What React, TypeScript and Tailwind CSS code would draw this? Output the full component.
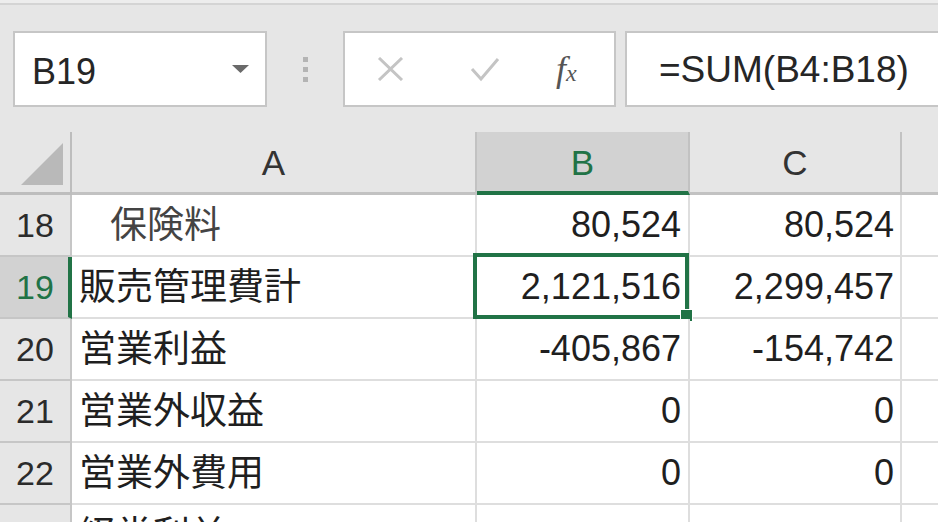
import React from "react";

const font = "font-['Liberation_Sans','Noto_Sans_CJK_JP',sans-serif]";

type Row = {
  num?: number;
  label: string;
  indent?: boolean;
  b: string;
  c: string;
};

// last row is only partly in view, its numbers sit below the edge
const rows: Row[] = [
  { num: 18, label: "保険料", indent: true, b: "80,524", c: "80,524" },
  { num: 19, label: "販売管理費計", b: "2,121,516", c: "2,299,457" },
  { num: 20, label: "営業利益", b: "-405,867", c: "-154,742" },
  { num: 21, label: "営業外収益", b: "0", c: "0" },
  { num: 22, label: "営業外費用", b: "0", c: "0" },
  { label: "経常利益", b: "", c: "" },
];

function FormulaBar() {
  return (
    <div className="bg-[#e6e6e6]">
      <div className="h-[3px] bg-[#ededed]" />
      <div className="h-[2px] bg-[#d4d4d4]" />
      <div className="flex items-center pl-[13px] pt-[26px] pb-[25px]">
        <div className="flex h-[76px] w-[254px] items-center justify-between border-2 border-[#c6c6c6] bg-white pl-[17px] pr-[16px]">
          <span className="pt-[6px] text-[36px] leading-none text-[#262626]">B19</span>
          <svg width="17" height="8" viewBox="0 0 17 8">
            <path d="M0 0 H17 L8.5 8 Z" fill="#6a6a6a" />
          </svg>
        </div>
        <div className="flex w-[76px] flex-col items-center gap-[5px]">
          <span className="h-[5px] w-[5px] bg-[#b4b4b4]" />
          <span className="h-[5px] w-[5px] bg-[#b4b4b4]" />
          <span className="h-[5px] w-[5px] bg-[#b4b4b4]" />
        </div>
        <div className="flex h-[76px] w-[273px] items-center border-2 border-[#c6c6c6] bg-white">
          <svg className="ml-[32px]" width="27" height="24" viewBox="0 0 27 24">
            <path d="M2 1 L25 23 M25 1 L2 23" stroke="#c4c4c4" strokeWidth="3" />
          </svg>
          <svg className="ml-[66px]" width="30" height="26" viewBox="0 0 30 26">
            <path d="M2 13 L11 23 L28 3" stroke="#c4c4c4" strokeWidth="3" fill="none" />
          </svg>
          <span className="ml-[56px] flex items-baseline font-['Liberation_Serif',serif] italic text-[#555]">
            <span className="text-[36px] leading-none">f</span>
            <span className="text-[24px] leading-none">x</span>
          </span>
        </div>
        <div className="ml-[9px] flex h-[76px] flex-1 items-center border-y-2 border-l-2 border-[#c6c6c6] bg-white pl-[32px]">
          <span className="text-[37px] leading-none text-[#262626]">=SUM(B4:B18)</span>
        </div>
      </div>
    </div>
  );
}

function ColumnHeaders() {
  return (
    <div className="grid h-[63px] grid-cols-[72px_405px_213px_212px_1fr] bg-[#e6e6e6] text-[35px] leading-none text-[#333]">
      <div className="flex items-start justify-start border-r-2 border-b-[3px] border-[#bdbdbd] pl-[21px] pt-[11px]">
        <svg width="42" height="42" viewBox="0 0 42 42">
          <path d="M42 0 V42 H0 Z" fill="#b9b9b9" />
        </svg>
      </div>
      <div className="flex items-center justify-center border-r-2 border-b-[3px] border-[#c2c2c2]">A</div>
      <div className="flex items-center justify-center border-r-2 border-r-[#c2c2c2] border-b-4 border-b-[#217346] bg-[#d2d2d2] pt-[1px] text-[#217346]">
        B
      </div>
      <div className="flex items-center justify-center border-r-2 border-b-[3px] border-[#c2c2c2]">C</div>
      <div className="border-b-[3px] border-[#c2c2c2]" />
    </div>
  );
}

function SheetRow({ row }: { row: Row }) {
  const active = row.num === 19;
  return (
    <div className="grid h-[62px] grid-cols-[72px_405px_213px_212px_1fr] leading-none text-[#1f1f1f]">
      <div
        className={
          active
            ? "flex items-center justify-center border-r-4 border-r-[#217346] border-b-2 border-b-[#c6c6c6] bg-[#d2d2d2] pl-[2px] text-[34px] text-[#217346]"
            : "flex items-center justify-center border-r-2 border-b-2 border-[#c6c6c6] bg-[#e6e6e6] text-[34px] text-[#2b2b2b]"
        }
      >
        {row.num}
      </div>
      <div
        className={
          "flex items-center border-r-2 border-b-2 border-[#dedede] bg-white text-[37px] " +
          (row.indent ? "pl-[38px] text-[#444]" : "pl-[7px]")
        }
      >
        {row.label}
      </div>
      <div className="relative flex items-center justify-end border-r-2 border-b-2 border-[#dedede] bg-white pr-[7px] text-[36px]">
        {row.b}
        {active && (
          <>
            <div className="absolute -left-[4px] -top-[4px] -right-[1px] -bottom-[2px] border-4 border-[#217346]" />
            <div className="absolute -right-[5px] -bottom-[5px] h-[13px] w-[13px] border border-white bg-[#217346]" />
          </>
        )}
      </div>
      <div className="flex items-center justify-end border-r-2 border-b-2 border-[#dedede] bg-white pr-[6px] text-[36px]">
        {row.c}
      </div>
      <div className="border-b-2 border-[#dedede] bg-white" />
    </div>
  );
}

export default function App() {
  return (
    <div className={`h-[522px] w-[938px] overflow-hidden bg-white ${font}`}>
      <FormulaBar />
      <ColumnHeaders />
      {rows.map((row) => (
        <SheetRow key={row.label} row={row} />
      ))}
    </div>
  );
}
